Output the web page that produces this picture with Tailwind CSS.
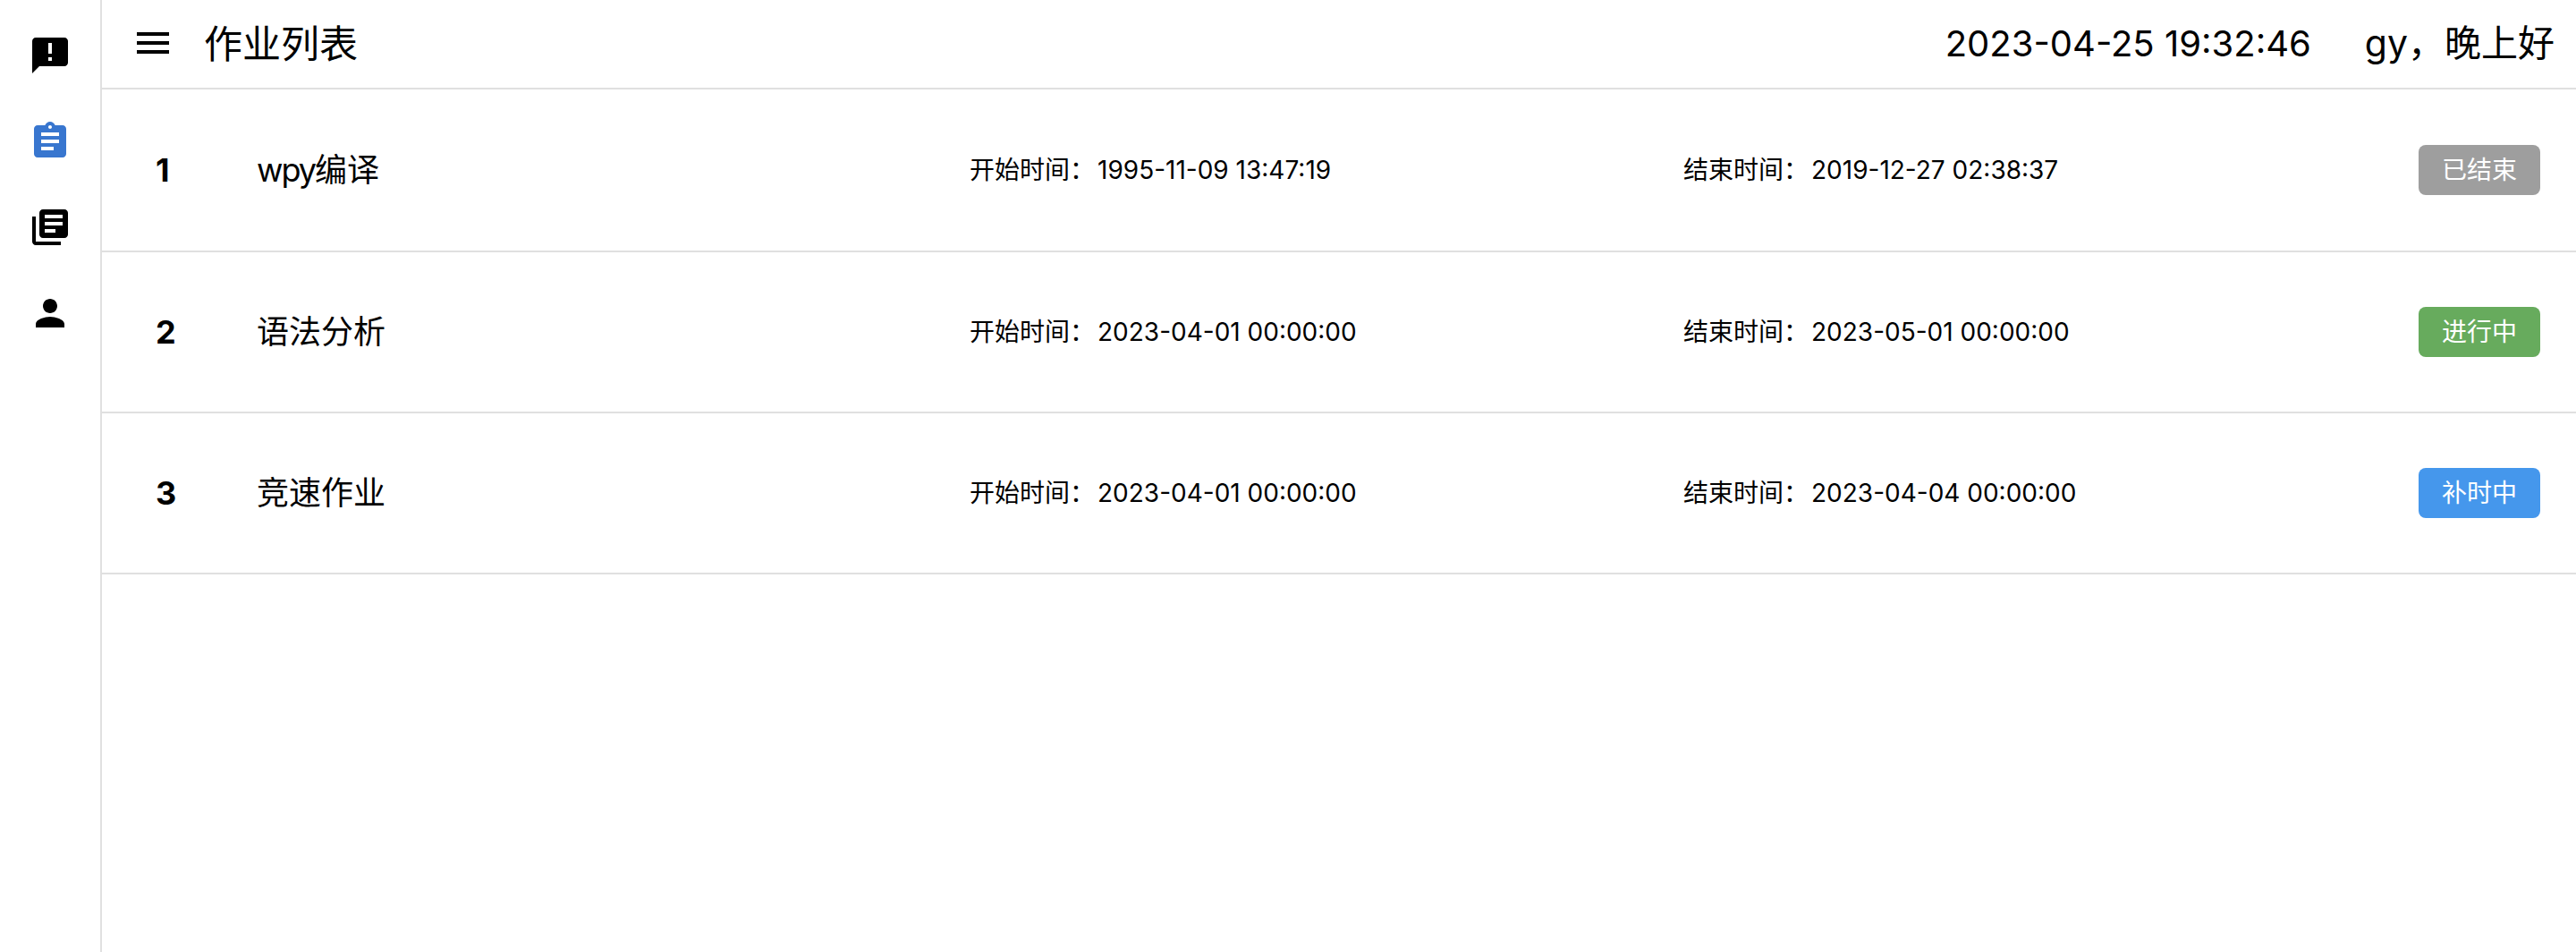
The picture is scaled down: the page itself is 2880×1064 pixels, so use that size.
<!DOCTYPE html>
<html lang="zh-CN">
  <head>
    <meta charset="UTF-8" />
    <title>作业列表</title>
    <script src="https://cdn.jsdelivr.net/npm/@tailwindcss/browser@4"></script>
  </head>
  <body class="bg-white text-black font-['Inter','Noto_Sans_CJK_SC',sans-serif]">
    <div class="flex h-[1064px]">
      <!-- sidebar -->
      <nav class="w-[114px] shrink-0 border-r-2 border-[#e0e0e0] flex flex-col items-center pt-[38px] gap-[48px]">
        <svg class="w-12 h-12" viewBox="0 0 24 24" fill="currentColor"><path d="M20 2H4c-1.1 0-1.99.9-1.99 2L2 22l4-4h14c1.1 0 2-.9 2-2V4c0-1.1-.9-2-2-2zm-7 9h-2V5h2v6zm0 4h-2v-2h2v2z" /></svg>
        <svg class="w-12 h-12 text-[#3876cf]" viewBox="0 0 24 24" fill="currentColor"><path d="M19 3h-4.18C14.4 1.84 13.3 1 12 1c-1.3 0-2.4.84-2.82 2H5c-1.1 0-2 .9-2 2v14c0 1.1.9 2 2 2h14c1.1 0 2-.9 2-2V5c0-1.1-.9-2-2-2zm-7 0c.55 0 1 .45 1 1s-.45 1-1 1-1-.45-1-1 .45-1 1-1zm2 14H7v-2h7v2zm3-4H7v-2h10v2zm0-4H7V7h10v2z" /></svg>
        <svg class="w-12 h-12" viewBox="0 0 24 24" fill="currentColor"><path d="M4 6H2v14c0 1.1.9 2 2 2h14v-2H4V6zm16-4H8c-1.1 0-2 .9-2 2v12c0 1.1.9 2 2 2h12c1.1 0 2-.9 2-2V4c0-1.1-.9-2-2-2zm-1 9H9V9h10v2zm-4 4H9v-2h6v2zm4-8H9V5h10v2z" /></svg>
        <svg class="w-12 h-12" viewBox="0 0 24 24" fill="currentColor"><path d="M12 12c2.21 0 4-1.79 4-4s-1.79-4-4-4-4 1.79-4 4 1.79 4 4 4zm0 2c-2.67 0-8 1.34-8 4v2h16v-2c0-2.66-5.33-4-8-4z" /></svg>
      </nav>

      <main class="flex-1">
        <!-- top bar -->
        <header class="h-[100px] border-b-2 border-[#e0e0e0] flex items-center pl-[33px] pr-[24px]">
          <svg class="w-12 h-12 shrink-0 -mt-[2px]" viewBox="0 0 24 24" fill="currentColor"><path d="M3 18h18v-2H3v2zm0-5h18v-2H3v2zm0-7v2h18V6H3z" /></svg>
          <h1 class="ml-[33px] text-[43px] leading-none">作业列表</h1>
          <span class="ml-auto text-[40px] leading-none">2023-04-25 19:32:46</span>
          <span class="ml-[60px] text-[41px] leading-none -mt-[1px]">gy，晚上好</span>
        </header>

        <!-- rows -->
        <div class="h-[182px] border-b-2 border-[#e0e0e0] grid grid-cols-[113px_797px_798px_1fr] items-center pl-[60px] pr-10">
          <span class="text-[36px] font-bold">1</span>
          <span class="text-[36px]"><span class="tracking-[-2px]">wpy</span>编译</span>
          <span class="text-[28px]">开始时间：<span class="ml-[3px]">1995-11-09 13:47:19</span></span>
          <div class="flex items-center">
            <span class="text-[28px]">结束时间：<span class="ml-[3px]">2019-12-27 02:38:37</span></span>
            <span class="ml-auto w-[136px] h-[56px] rounded-lg bg-[#9e9e9e] text-white text-[28px] flex items-center justify-center">已结束</span>
          </div>
        </div>
        <div class="h-[180px] border-b-2 border-[#e0e0e0] grid grid-cols-[113px_797px_798px_1fr] items-center pl-[60px] pr-10">
          <span class="text-[36px] font-bold">2</span>
          <span class="text-[36px]">语法分析</span>
          <span class="text-[28px]">开始时间：<span class="ml-[3px]">2023-04-01 00:00:00</span></span>
          <div class="flex items-center">
            <span class="text-[28px]">结束时间：<span class="ml-[3px]">2023-05-01 00:00:00</span></span>
            <span class="ml-auto w-[136px] h-[56px] rounded-lg bg-[#67ab5d] text-white text-[28px] flex items-center justify-center">进行中</span>
          </div>
        </div>
        <div class="h-[180px] border-b-2 border-[#e0e0e0] grid grid-cols-[113px_797px_798px_1fr] items-center pl-[60px] pr-10">
          <span class="text-[36px] font-bold">3</span>
          <span class="text-[36px]">竞速作业</span>
          <span class="text-[28px]">开始时间：<span class="ml-[3px]">2023-04-01 00:00:00</span></span>
          <div class="flex items-center">
            <span class="text-[28px]">结束时间：<span class="ml-[3px]">2023-04-04 00:00:00</span></span>
            <span class="ml-auto w-[136px] h-[56px] rounded-lg bg-[#4597ec] text-white text-[28px] flex items-center justify-center">补时中</span>
          </div>
        </div>
      </main>
    </div>
  </body>
</html>
